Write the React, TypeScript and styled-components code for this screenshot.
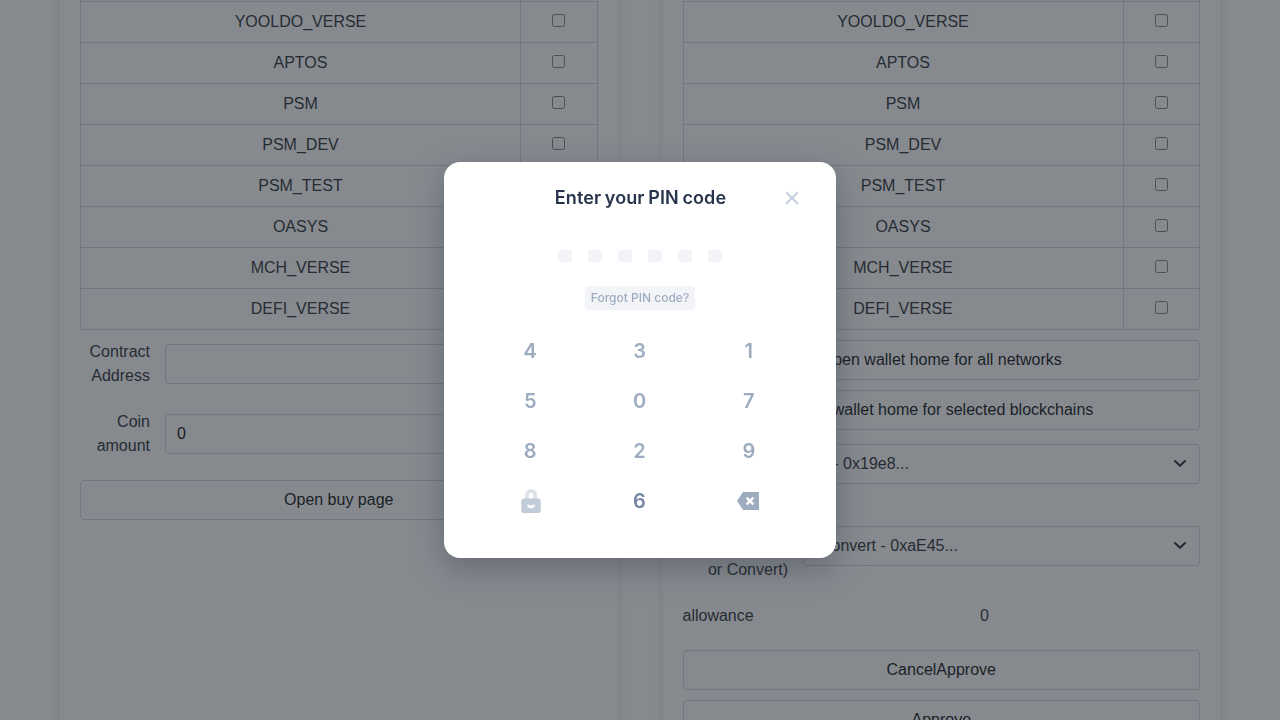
import React from "react";
import styled, { createGlobalStyle } from "styled-components";

const GlobalStyle = createGlobalStyle`
  *, *::before, *::after { box-sizing: border-box; }
  html, body { margin: 0; height: 100%; overflow: hidden; background: #fff; }
  body { font: 16px/24px "Liberation Sans", Arial, sans-serif; color: #212529; }
  button, input { font: inherit; color: inherit; }
`;

const Page = styled.main`
  height: 100vh;
  overflow: hidden;
`;

const Columns = styled.div`
  display: grid;
  grid-template-columns: 1fr 1fr;
  gap: 45px;
  margin: -40px 60px 0;
  height: 900px;
`;

const Card = styled.section`
  padding: 0 20px;
  background: #fff;
  box-shadow: 0 0 10px rgba(0, 0, 0, 0.11);
`;

const ChainTable = styled.div`
  border: 1px solid #d0d4d9;
  border-bottom: 0;
  margin-bottom: 10px;
`;

const ChainRow = styled.label`
  display: flex;
  height: 41px;
  border-bottom: 1px solid #d0d4d9;
`;

const ChainName = styled.span`
  flex: 1;
  padding: 8px;
  text-align: center;
`;

const ChainCheck = styled.span`
  width: 76.5px;
  border-left: 1px solid #d0d4d9;
  display: flex;
  justify-content: center;
  padding-top: 12px;

  input {
    width: 13px;
    height: 13px;
    margin: 0;
  }
`;

const Field = styled.div<{ $labelWidth: number }>`
  display: grid;
  grid-template-columns: ${(p) => p.$labelWidth}px 1fr;
  column-gap: 15px;
  align-items: center;
  min-height: 48px;
  margin-bottom: 22px;
`;

const FieldLabel = styled.label`
  text-align: right;
`;

const TextInput = styled.input`
  width: 100%;
  min-width: 0;
  height: 40px;
  padding: 0 11px;
  border: 1px solid #d0d4d9;
  border-radius: 4px;
  background: #fff;
  color: #000;
`;

const SelectBox = styled.div`
  display: flex;
  align-items: center;
  justify-content: space-between;
  height: 40px;
  padding: 0 11px 0 16px;
  border: 1px solid #d0d4d9;
  border-radius: 4px;
`;

const ActionButton = styled.button`
  display: block;
  width: 100%;
  height: 40px;
  margin-bottom: 10px;
  padding: 0;
  border: 1px solid #d0d4d9;
  border-radius: 4px;
  background: #fff;
  color: #080808;
`;

const Allowance = styled.div`
  display: grid;
  grid-template-columns: 297.5px 1fr;
  height: 24px;
  margin-bottom: 22px;
`;

const Overlay = styled.div`
  position: fixed;
  inset: 0;
  display: flex;
  align-items: center;
  justify-content: center;
  background: rgba(42, 50, 58, 0.57);
`;

const Dialog = styled.div`
  width: 392px;
  height: 396px;
  padding: 22px 32px 0;
  border-radius: 16px;
  background: #fff;
  box-shadow: 0 10px 30px rgba(42, 48, 64, 0.36);
  font-family: Inter, sans-serif;
`;

const DialogHeader = styled.header`
  display: grid;
  grid-template-columns: 24px 1fr 24px;
  align-items: center;
  height: 28px;
`;

const Title = styled.h1`
  grid-column: 2;
  margin: 0;
  padding-left: 1px;
  text-align: center;
  font-size: 18px;
  font-weight: 600;
  line-height: 28px;
  letter-spacing: 0.1px;
  word-spacing: -1px;
  color: #27344b;
`;

const IconButton = styled.button`
  display: flex;
  align-items: center;
  justify-content: center;
  padding: 0;
  border: 0;
  background: none;
`;

const PinSlots = styled.div`
  display: flex;
  justify-content: center;
  gap: 16px;
  margin-top: 38px;
`;

const PinSlot = styled.span`
  width: 14px;
  height: 12px;
  border-radius: 2px;
  background: #f3f4f8;
`;

const ForgotButton = styled.button`
  display: block;
  width: 110px;
  height: 24px;
  margin: 24px auto 16px;
  padding: 0;
  border: 0;
  border-radius: 4px;
  background: #f3f4f8;
  color: #9eacc0;
  font-size: 12px;
  font-weight: 500;
  line-height: 24px;
  white-space: nowrap;
`;

const Keypad = styled.div`
  display: grid;
  grid-template-columns: repeat(3, 109px);
  grid-auto-rows: 50px;
  column-gap: 0.3px;
  justify-content: center;
  margin-left: -1px;
`;

const Key = styled.button<{ $active?: boolean }>`
  display: flex;
  align-items: center;
  justify-content: center;
  padding: 0;
  border: 0;
  background: none;
  font-size: 20px;
  font-weight: 600;
  color: ${(p) => (p.$active ? "#7484a2" : "#9eacc0")};
`;

const chains = ["", "YOOLDO_VERSE", "APTOS", "PSM", "PSM_DEV", "PSM_TEST", "OASYS", "MCH_VERSE", "DEFI_VERSE"];

const Chains = () => (
  <ChainTable>
    {chains.map((name) => (
      <ChainRow key={name}>
        <ChainName>{name}</ChainName>
        <ChainCheck><input type="checkbox" /></ChainCheck>
      </ChainRow>
    ))}
  </ChainTable>
);

const Chevron = () => (
  <svg width="16" height="16" viewBox="0 0 16 16" fill="none" stroke="#212529" strokeWidth="2.1" strokeLinecap="round" strokeLinejoin="round">
    <path d="m3 5 5 4.8L13 5" />
  </svg>
);

const LockIcon = () => (
  <svg width="21" height="24" viewBox="-1 0 21 24" fill="none">
    <path d="M6 11V6a4.1 4.1 0 0 1 8.2 0v5" stroke="#dce2e9" strokeWidth="3.7" />
    <rect x="0.3" y="9.6" width="19.4" height="14.4" rx="2.6" fill="#c1cbd7" />
    <path d="M6.3 15.8c2.2 1 5.4 1 7.6 0a3.9 4.3 0 0 1-7.6 0Z" fill="#fff" stroke="#fff" strokeWidth=".6" strokeLinejoin="round" />
  </svg>
);

const BackspaceIcon = () => (
  <svg width="23" height="18" viewBox="0 0 23 18" fill="none">
    <path d="M6 0h15.4a.6.6 0 0 1 .6.6v16.8a.6.6 0 0 1-.6.6H6L0 9Z" fill="#9eacc0" />
    <path d="m9.6 5.6 6.8 6.8m0-6.8-6.8 6.8" stroke="#fff" strokeWidth="2.3" />
  </svg>
);

export default function App() {
  return (
    <>
      <GlobalStyle />
      <Page>
        <Columns>
          <Card>
            <Chains />
            <Field $labelWidth={70}>
              <FieldLabel>Contract Address</FieldLabel>
              <TextInput />
            </Field>
            <Field $labelWidth={70}>
              <FieldLabel>Coin amount</FieldLabel>
              <TextInput defaultValue="0" />
            </Field>
            <ActionButton>Open buy page</ActionButton>
          </Card>
          <Card>
            <Chains />
            <ActionButton>Open wallet home for all networks</ActionButton>
            <ActionButton>Open wallet home for selected blockchains</ActionButton>
            <Field $labelWidth={105.5}>
              <FieldLabel />
              <SelectBox>1 - 0x19e8...<Chevron /></SelectBox>
            </Field>
            <Field $labelWidth={105.5}>
              <FieldLabel>Spender<br />(Bridge<br />or Convert)</FieldLabel>
              <SelectBox>Convert - 0xaE45...<Chevron /></SelectBox>
            </Field>
            <Allowance><span>allowance</span><span>0</span></Allowance>
            <ActionButton>CancelApprove</ActionButton>
            <ActionButton>Approve</ActionButton>
          </Card>
        </Columns>
      </Page>
      <Overlay>
        <Dialog role="dialog">
          <DialogHeader>
            <Title>Enter your PIN code</Title>
            <IconButton aria-label="Close">
              <svg width="24" height="24" viewBox="0 0 24 24" fill="none" stroke="#c4cfdc" strokeWidth="2">
                <path d="m6.2 6.2 11.6 11.6m0-11.6L6.2 17.8" />
              </svg>
            </IconButton>
          </DialogHeader>
          <PinSlots>
            {[0, 1, 2, 3, 4, 5].map((slot) => <PinSlot key={slot} />)}
          </PinSlots>
          <ForgotButton>Forgot PIN code?</ForgotButton>
          <Keypad>
            {["4", "3", "1", "5", "0", "7", "8", "2", "9"].map((digit) => <Key key={digit}>{digit}</Key>)}
            <Key aria-label="Secured"><LockIcon /></Key>
            <Key $active>6</Key>
            <Key aria-label="Delete"><BackspaceIcon /></Key>
          </Keypad>
        </Dialog>
      </Overlay>
    </>
  );
}
